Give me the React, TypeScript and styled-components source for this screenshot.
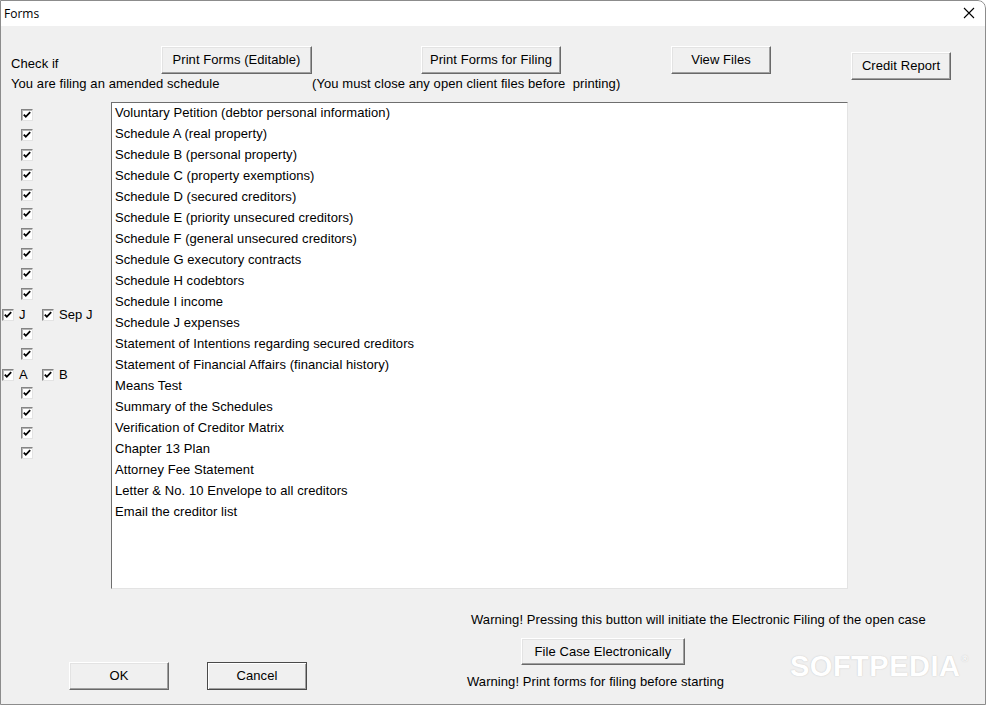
import React, { useState } from "react";
import styled, { createGlobalStyle } from "styled-components";

const GlobalStyle = createGlobalStyle`
  html, body {
    margin: 0;
    padding: 0;
    background: #ffffff;
  }
  body {
    font-family: "Liberation Sans", Arial, sans-serif;
    font-size: 13px;
    letter-spacing: 0.07px;
    color: #000;
  }
`;

const Window = styled.div`
  position: relative;
  width: 986px;
  height: 705px;
  display: flex;
  flex-direction: column;
  background: #f0f0f0;
  overflow: hidden;
  border-top-right-radius: 8px;

  &::after {
    content: "";
    position: absolute;
    inset: 0;
    border: 1px solid #8c8c8c;
    border-top-right-radius: 8px;
    pointer-events: none;
  }
`;

const TitleBar = styled.div`
  height: 26px;
  flex: none;
  display: flex;
  align-items: center;
  justify-content: space-between;
  background: #ffffff;
  padding: 0 9px 0 4px;
  font-family: "Open Sans", "Noto Sans", sans-serif;
  font-size: 12px;
  letter-spacing: 0;
`;

const CloseButton = styled.button`
  width: 16px;
  height: 16px;
  padding: 0;
  border: none;
  background: transparent;
  display: flex;
  align-items: center;
  justify-content: center;
`;

const Header = styled.div`
  display: grid;
  grid-template-columns: 11px 150px 151px 109px 140px 110px 100px 80px 100px 1fr;
  grid-template-rows: 48px 16px;
  row-gap: 2px;
`;

const Caption = styled.div<{ $col: string; $row: number }>`
  grid-column: ${(p) => p.$col};
  grid-row: ${(p) => p.$row};
  align-self: end;
  line-height: 16px;
  white-space: nowrap;
  margin-bottom: ${(p) => (p.$row === 1 ? "2px" : "0")};
`;

const Button = styled.button<{ $default?: boolean; $w?: number; $h?: number }>`
  width: ${(p) => p.$w ?? 100}px;
  height: ${(p) => p.$h ?? 28}px;
  padding: 0 0 1px;
  font-family: "Liberation Sans", Arial, sans-serif;
  font-size: 13px;
  letter-spacing: 0.07px;
  color: #000;
  background: #f0f0f0;
  border: 1px solid;
  border-color: ${(p) => (p.$default ? "#4a4a4a" : "#ffffff #696969 #696969 #ffffff")};
  box-shadow: ${(p) =>
    p.$default
      ? "inset 1px 1px #ffffff, inset -1px -1px #a0a0a0"
      : "inset -1px -1px #a0a0a0, inset 1px 1px #e3e3e3"};
  white-space: nowrap;
`;

const HeaderButton = styled(Button)<{ $col: number; $top?: number }>`
  grid-column: ${(p) => p.$col};
  grid-row: 1 / span 2;
  align-self: start;
  margin-top: ${(p) => p.$top ?? 20}px;
`;

const Main = styled.div`
  display: flex;
  margin-top: 10px;
`;

const CheckColumn = styled.div`
  width: 111px;
  flex: none;
  padding-top: 3px;
  display: flex;
  flex-direction: column;
`;

const CheckRow = styled.div<{ $pair?: boolean }>`
  height: 19.9px;
  display: flex;
  align-items: center;
  padding-left: ${(p) => (p.$pair ? 2 : 21)}px;
  margin-top: ${(p) => (p.$pair ? 1 : 0)}px;
  margin-bottom: ${(p) => (p.$pair ? -1 : 0)}px;
`;

const PairItem = styled.label<{ $w?: number }>`
  display: flex;
  align-items: center;
  gap: 5px;
  width: ${(p) => (p.$w ? `${p.$w}px` : "auto")};
  font-size: 13px;
`;

const Box = styled.span`
  width: 12px;
  height: 12px;
  box-sizing: border-box;
  flex: none;
  display: flex;
  align-items: center;
  justify-content: center;
  background: #ffffff;
  border: 1px solid;
  border-color: #848484 #e3e3e3 #e3e3e3 #848484;
  box-shadow: inset 1px 1px #b5b5b5;
`;

const ListBox = styled.div`
  width: 737px;
  height: 487px;
  box-sizing: border-box;
  background: #ffffff;
  border: 1px solid;
  border-color: #6e6e6e #e3e3e3 #e3e3e3 #6e6e6e;
  padding: 0 0 0 3px;
`;

const ListItem = styled.div`
  height: 21px;
  line-height: 19px;
  white-space: nowrap;
`;

const Footer = styled.div`
  display: flex;
  flex: 1;
`;

const DialogButtons = styled.div`
  width: 398px;
  padding: 73px 0 0 69px;
  display: flex;
  align-items: flex-start;
  gap: 38px;
`;

const FilingColumn = styled.div`
  display: flex;
  flex-direction: column;
  align-items: flex-start;
  padding-top: 23px;
`;

const Note = styled.div<{ $indent?: number; $gap?: number }>`
  line-height: 16px;
  white-space: nowrap;
  margin-left: ${(p) => p.$indent ?? 0}px;
  margin-top: ${(p) => p.$gap ?? 0}px;
`;

const FileButton = styled(Button)`
  margin: 10px 0 0 54px;
`;

const Watermark = styled.div`
  position: absolute;
  left: 790px;
  top: 650px;
  display: flex;
  align-items: flex-start;
  font-family: "Liberation Sans", Arial, sans-serif;
  font-weight: bold;
  font-size: 29px;
  letter-spacing: 0.5px;
  color: #ffffff;
  text-shadow: 0 0 1px #c8c8c8, 0 0 2px #dcdcdc;
  pointer-events: none;
`;

const Registered = styled.span`
  font-size: 9px;
  margin-top: 4px;
  margin-left: 1px;
`;

const forms = [
  "Voluntary Petition (debtor personal information)",
  "Schedule A (real property)",
  "Schedule B (personal property)",
  "Schedule C (property exemptions)",
  "Schedule D (secured creditors)",
  "Schedule E (priority unsecured creditors)",
  "Schedule F (general unsecured creditors)",
  "Schedule G executory contracts",
  "Schedule H codebtors",
  "Schedule I income",
  "Schedule J expenses",
  "Statement of Intentions regarding secured creditors",
  "Statement of Financial Affairs (financial history)",
  "Means Test",
  "Summary of the Schedules",
  "Verification of Creditor Matrix",
  "Chapter 13 Plan",
  "Attorney Fee Statement",
  "Letter & No. 10 Envelope to all creditors",
  "Email the creditor list",
];

type Row = { pair?: [string, string] };

const checkRows: Row[] = [
  {}, {}, {}, {}, {}, {}, {}, {}, {}, {},
  { pair: ["J", "Sep J"] },
  {}, {},
  { pair: ["A", "B"] },
  {}, {}, {}, {},
];

const Check = () => (
  <Box>
    <svg width="8" height="8" viewBox="0 0 8 8">
      <path d="M0.8 3.6 L2.8 5.8 L7.2 1.2" stroke="#000" strokeWidth="1.8" fill="none" />
    </svg>
  </Box>
);

const App = () => {
  const [selected] = useState<number | null>(null);

  return (
    <>
      <GlobalStyle />
      <Window>
        <TitleBar>
          <span>Forms</span>
          <CloseButton aria-label="Close">
            <svg width="12" height="12" viewBox="0 0 12 12">
              <path d="M1 1 L11 11 M11 1 L1 11" stroke="#000" strokeWidth="1.1" />
            </svg>
          </CloseButton>
        </TitleBar>

        <Header>
          <Caption $col="2" $row={1}>Check if</Caption>
          <HeaderButton $col={3} $w={151}>Print Forms (Editable)</HeaderButton>
          <HeaderButton $col={5} $w={140}>Print Forms for Filing</HeaderButton>
          <HeaderButton $col={7} $w={100}>View Files</HeaderButton>
          <HeaderButton $col={9} $w={100} $top={26}>Credit Report</HeaderButton>
          <Caption $col="2 / span 2" $row={2}>You are filing an amended schedule</Caption>
          <Caption $col="4 / span 5" $row={2}>
            (You must close any open client files before&nbsp; printing)
          </Caption>
        </Header>

        <Main>
          <CheckColumn>
            {checkRows.map((row, i) =>
              row.pair ? (
                <CheckRow key={i} $pair>
                  <PairItem $w={40}>
                    <Check />
                    {row.pair[0]}
                  </PairItem>
                  <PairItem>
                    <Check />
                    {row.pair[1]}
                  </PairItem>
                </CheckRow>
              ) : (
                <CheckRow key={i}>
                  <Check />
                </CheckRow>
              )
            )}
          </CheckColumn>
          <ListBox>
            {forms.map((f, i) => (
              <ListItem key={f} data-selected={selected === i}>
                {f}
              </ListItem>
            ))}
          </ListBox>
        </Main>

        <Footer>
          <DialogButtons>
            <Button $w={100} $h={28}>OK</Button>
            <Button $default $w={100} $h={28}>Cancel</Button>
          </DialogButtons>
          <FilingColumn>
            <Note $indent={4}>
              Warning! Pressing this button will initiate the Electronic Filing of the open case
            </Note>
            <FileButton $w={164} $h={27}>File Case Electronically</FileButton>
            <Note $gap={9}>Warning! Print forms for filing before starting</Note>
          </FilingColumn>
        </Footer>

        <Watermark>
          SOFTPEDIA<Registered>®</Registered>
        </Watermark>
      </Window>
    </>
  );
};

export default App;
